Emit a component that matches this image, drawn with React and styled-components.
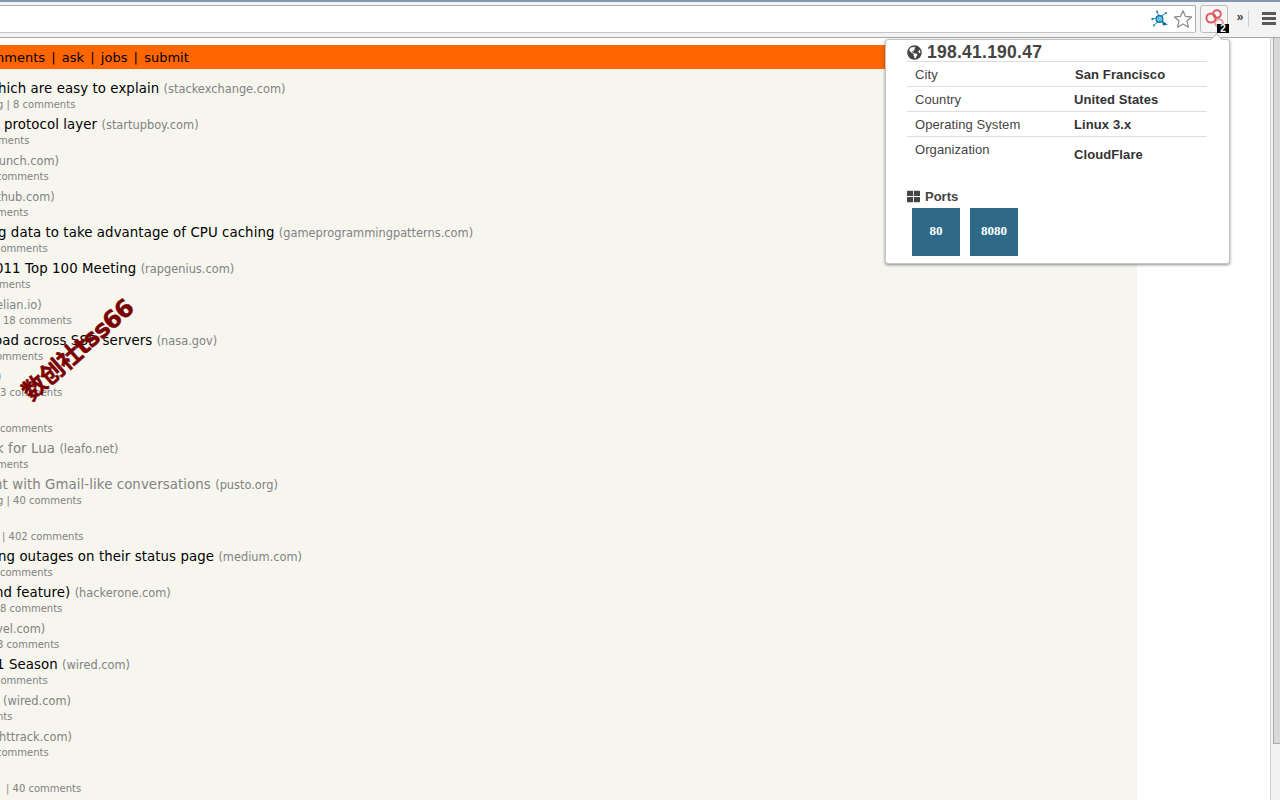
import React from "react";
import styled, { createGlobalStyle } from "styled-components";
import { FaGlobeAmericas, FaThLarge } from "react-icons/fa";

const Global = createGlobalStyle`
  html, body { margin: 0; padding: 0; height: 100%; overflow: hidden; background: #fff; }
  #root { height: 100%; }
`;

const Shell = styled.div`
  position: relative;
  width: 1280px;
  height: 800px;
  overflow: hidden;
  display: flex;
  flex-direction: column;
  background: #fff;
`;

const Toolbar = styled.header`
  flex: none;
  height: 38px;
  box-sizing: border-box;
  border-top: 2px solid #8496b0;
  border-bottom: 1px solid #a8a8a8;
  background: #f3f3f3;
  display: flex;
  align-items: flex-start;
  padding-top: 3px;
`;

const Omnibox = styled.div`
  flex: none;
  width: 1198px;
  height: 28px;
  margin-left: -2px;
  box-sizing: border-box;
  background: #fff;
  border: 1px solid #adadad;
  border-bottom-color: #c6c6c6;
  border-radius: 2px;
  display: flex;
  align-items: center;
  justify-content: flex-end;
  gap: 3px;
  padding-right: 2px;
`;

const ExtButton = styled.div`
  flex: none;
  position: relative;
  width: 28px;
  height: 28px;
  margin-left: 4px;
  box-sizing: border-box;
  border: 1px solid #bdbdbd;
  border-radius: 3px;
  background: #f6f6f6;
`;

const Badge = styled.span`
  position: absolute;
  right: -2px;
  bottom: -1px;
  width: 12px;
  height: 9px;
  background: #000;
  color: #fff;
  font: bold 10px/9px "Liberation Sans", sans-serif;
  text-align: center;
`;

const Overflow = styled.span`
  flex: none;
  width: 16px;
  padding-left: 4px;
  height: 28px;
  text-align: center;
  font: bold 12px/24px "Liberation Sans", sans-serif;
  color: #444;
`;

const Divider = styled.span`
  flex: none;
  width: 1px;
  height: 17px;
  margin: 5px 13px 0 0;
  background: #cfcfcf;
`;

const Burger = styled.span`
  flex: none;
  width: 14px;
  height: 13px;
  margin-top: 7px;
  box-sizing: border-box;
  border-top: 3px solid #5a5a5a;
  border-bottom: 3px solid #5a5a5a;
  position: relative;
  &::after {
    content: "";
    position: absolute;
    left: 0;
    right: 0;
    top: 2px;
    height: 3px;
    background: #5a5a5a;
  }
`;

const Body = styled.div`
  flex: 1;
  min-height: 0;
  display: flex;
`;

const Page = styled.main`
  flex: none;
  width: 1137px;
  margin-top: 7px;
  background: #f6f6ef;
  font-family: "DejaVu Sans", Verdana, sans-serif;
  overflow: hidden;
  position: relative;
`;

const NavBar = styled.nav`
  height: 24px;
  background: #ff6600;
  font-size: 13px;
  line-height: 25px;
  color: #000;
  white-space: pre;
  margin-left: -4px;
`;

const Sep = styled.span`
  margin: 0 6.2px;
`;

const List = styled.ol`
  list-style: none;
  margin: 0;
  padding: 11px 0 0;
`;

const Item = styled.li`
  height: 36px;
  white-space: pre;
`;

const Title = styled.div`
  height: 17px;
  font-size: 13.33px;
  letter-spacing: 0.08px;
  line-height: 18px;
  color: ${(p) => (p.$visited ? "#828282" : "#000")};
  margin-left: ${(p) => p.$x}px;
`;

const Site = styled.span`
  font-size: 11.4px;
  letter-spacing: 0;
  color: #828282;
`;

const Sub = styled.div`
  height: 19px;
  font-size: 10px;
  line-height: 16px;
  color: #828282;
  margin-left: ${(p) => p.$x}px;
`;

const Watermark = styled.div`
  position: absolute;
  left: -2px;
  top: 293px;
  width: 160px;
  text-align: center;
  transform: rotate(-41.5deg);
  font: bold 24px/24px "DejaVu Sans", "Noto Sans CJK SC", sans-serif;
  letter-spacing: -0.9px;
  -webkit-text-stroke: 0.5px #7a0000;
  color: #7a0000;
  white-space: nowrap;
`;

const Scrollbar = styled.aside`
  flex: none;
  width: 10px;
  margin-left: 133px;
  box-sizing: border-box;
  background: #f1f1f1;
  border-left: 1px solid #cfcfcf;
  padding-left: 2px;
`;

const Thumb = styled.div`
  height: 706px;
  box-sizing: border-box;
  background: #d8d8d8;
  border-left: 1px solid #aaa;
  border-bottom: 1px solid #aaa;
`;

const Popup = styled.section`
  position: absolute;
  left: 885px;
  top: 39px;
  width: 345px;
  height: 225px;
  box-sizing: border-box;
  background: #fff;
  border: 1px solid #c4c4c4;
  border-radius: 3px;
  box-shadow: 0 1px 3px rgba(0, 0, 0, 0.45);
  padding: 0 21px;
  color: #444;
  font-family: "Liberation Sans", Arial, sans-serif;
  &::before {
    content: "";
    position: absolute;
    top: -5px;
    right: 8px;
    width: 8px;
    height: 8px;
    background: #fff;
    border-top: 1px solid #bbb;
    border-left: 1px solid #bbb;
    transform: rotate(45deg);
  }
`;

const Ip = styled.h2`
  margin: 0;
  height: 21px;
  padding-top: 3px;
  box-sizing: border-box;
  display: flex;
  align-items: center;
  gap: 5px;
  font-size: 17.5px;
  letter-spacing: 0.25px;
  font-weight: bold;
  color: #444;
`;

const Rows = styled.div`
  width: 300px;
`;

const Row = styled.div`
  display: grid;
  grid-template-columns: 159px 1fr;
  height: ${(p) => (p.$tall ? 48 : 25)}px;
  box-sizing: border-box;
  border-top: 1px solid #ddd;
  padding-left: 8px;
  font-size: 13px;
  line-height: 26px;
  letter-spacing: 0.08px;
`;

const Value = styled.b`
  color: #333;
  letter-spacing: 0.1px;
  margin-left: ${(p) => p.$x || 0}px;
  margin-top: ${(p) => p.$y || 0}px;
`;

const PortsHead = styled.h3`
  margin: 0;
  padding-top: 2px;
  height: 20px;
  display: flex;
  align-items: center;
  gap: 5px;
  font-size: 13px;
  font-weight: bold;
  color: #444;
`;

const Ports = styled.div`
  display: flex;
  gap: 10px;
  margin-top: 2px;
  padding-left: 5px;
`;

const Port = styled.div`
  width: 48px;
  height: 48px;
  background: #2e6a87;
  color: #fff;
  font: bold 13px/46px "Liberation Serif", serif;
  text-align: center;
`;

const rows = [
  { x: -13, t: "which are easy to explain", s: "(stackexchange.com)", m: "g | 8 comments", mx: -3 },
  { x: 4, t: "protocol layer", s: "(startupboy.com)", m: "ments", mx: -2 },
  { x: -6, t: "", s: "runch.com)", m: "comments", mx: -4 },
  { x: -7, t: "", s: "ithub.com)", m: "ments", mx: -3 },
  { x: -2, t: "g data to take advantage of CPU caching", s: "(gameprogrammingpatterns.com)", m: "comments", mx: -5 },
  { x: -5, t: "011 Top 100 Meeting", s: "(rapgenius.com)", m: "ments", mx: -1 },
  { x: -4, t: "", s: "elian.io)", m: "18 comments", mx: 3 },
  { x: -6, t: "oad across SSD servers", s: "(nasa.gov)", m: "omments", mx: -4 },
  { x: -3, t: "", s: ")", m: "3 comments", mx: 0 },
  { x: 0, t: "", s: "", m: "comments", mx: 0 },
  { x: -4, t: "k for Lua", s: "(leafo.net)", m: "ments", mx: -3 },
  { x: -6, t: "nt with Gmail-like conversations", s: "(pusto.org)", m: "g | 40 comments", mx: -3, v: true },
  { x: 0, t: "", s: "", m: "| 402 comments", mx: 2 },
  { x: -2, t: "ng outages on their status page", s: "(medium.com)", m: "comments", mx: 0 },
  { x: -5, t: "nd feature)", s: "(hackerone.com)", m: "8 comments", mx: 0 },
  { x: -4, t: "", s: "vel.com)", m: "3 comments", mx: -3 },
  { x: -4, t: "1 Season", s: "(wired.com)", m: "comments", mx: -5 },
  { x: 3, t: "", s: "(wired.com)", m: "nts", mx: -3 },
  { x: -1, t: "", s: "httrack.com)", m: "comments", mx: -4 },
  { x: 0, t: "", s: "", m: "| 40 comments", mx: 6 },
];

function TranslateIcon() {
  return (
    <svg width="20" height="18" viewBox="0 0 20 18" aria-hidden="true">
      <g stroke="#1b8ab5" strokeWidth="1" fill="none">
        <path d="M3 9 9 7M9 7 7 1M10 7 16 3M10 10 4 15M11 10 16 14" />
        <circle cx="9.5" cy="9" r="3.4" fill="#5fc3e4" stroke="#0f6f9c" strokeWidth="1.2" />
      </g>
      <path d="M12 11.5 18 14.5 13 15.5Z" fill="#0b6a9a" />
      <circle cx="2.5" cy="9" r="1.2" fill="#1b8ab5" />
      <circle cx="7" cy="1.5" r="1.1" fill="#1b8ab5" />
      <circle cx="16" cy="3" r="1.1" fill="#1b8ab5" />
      <circle cx="4" cy="15.5" r="1.1" fill="#1b8ab5" />
    </svg>
  );
}

function StarIcon() {
  return (
    <svg width="20" height="20" viewBox="0 0 20 20" aria-hidden="true">
      <path
        d="M10 1.8 12.5 7.4 18.6 8 14 12.1 15.4 18.2 10 15 4.6 18.2 6 12.1 1.4 8 7.5 7.4Z"
        fill="#fff"
        stroke="#8d8d8d"
        strokeWidth="1.3"
        strokeLinejoin="round"
      />
    </svg>
  );
}

const Rings = styled.svg`
  display: block;
  margin: 1px 0 0 2px;
`;

function RingsIcon() {
  return (
    <Rings width="22" height="22" viewBox="0 0 22 22" aria-hidden="true">
      <g fill="none" stroke="#dc5a60" strokeWidth="2">
        <circle cx="16" cy="16" r="3.8" stroke="#e9a0a3" />
        <circle cx="14" cy="7" r="3.8" />
        <circle cx="8" cy="11" r="4.6" />
      </g>
    </Rings>
  );
}

export default function App() {
  return (
    <Shell>
      <Global />
      <Toolbar>
        <Omnibox>
          <TranslateIcon />
          <StarIcon />
        </Omnibox>
        <ExtButton>
          <RingsIcon />
          <Badge>2</Badge>
        </ExtButton>
        <Overflow>»</Overflow>
        <Divider />
        <Burger />
      </Toolbar>
      <Body>
        <Page>
          <NavBar>
            nments<Sep>|</Sep>ask<Sep>|</Sep>jobs<Sep>|</Sep>submit
          </NavBar>
          <List>
            {rows.map((r, i) => (
              <Item key={i}>
                <Title $x={r.x} $visited={r.v || i === 10}>
                  {r.t}
                  {r.t && r.s ? " " : ""}
                  {r.s && <Site>{r.s}</Site>}
                </Title>
                <Sub $x={r.mx}>{r.m}</Sub>
              </Item>
            ))}
          </List>
          <Watermark>数创社tss66</Watermark>
        </Page>
        <Scrollbar>
          <Thumb />
        </Scrollbar>
      </Body>
      <Popup>
        <Ip>
          <FaGlobeAmericas size={15} />
          198.41.190.47
        </Ip>
        <Rows>
          <Row>
            <span>City</span>
            <Value $x={1}>San Francisco</Value>
          </Row>
          <Row>
            <span>Country</span>
            <Value>United States</Value>
          </Row>
          <Row>
            <span>Operating System</span>
            <Value>Linux 3.x</Value>
          </Row>
          <Row $tall>
            <span>Organization</span>
            <Value $y={5}>CloudFlare</Value>
          </Row>
        </Rows>
        <PortsHead>
          <FaThLarge size={13} />
          Ports
        </PortsHead>
        <Ports>
          <Port>80</Port>
          <Port>8080</Port>
        </Ports>
      </Popup>
    </Shell>
  );
}
